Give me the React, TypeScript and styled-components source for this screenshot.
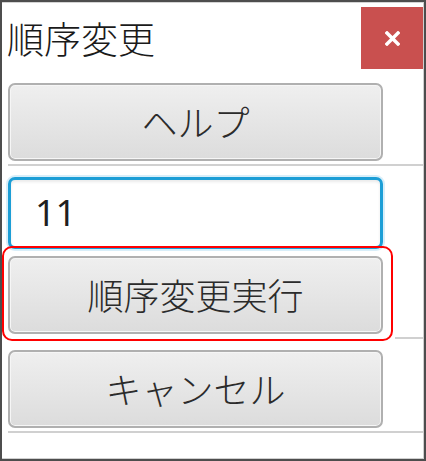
import React from 'react'
import styled, { createGlobalStyle } from 'styled-components'

const GlobalStyle = createGlobalStyle`
    html, body {
        margin: 0;
        padding: 0;
        background: #ffffff;
    }
    body {
        font-family: "Noto Sans CJK JP", "Noto Sans", sans-serif;
    }
`

function App() {
    return (
        <Frame>
            <GlobalStyle />
            <Panel>
                <Header>
                    <Title>順序変更</Title>
                    <CloseButton aria-label="close">
                        <svg width="15" height="15" viewBox="0 0 15 15">
                            <path d="M2 2 L13 13 M13 2 L2 13" stroke="#ffffff" strokeWidth="3.4" strokeLinecap="square" />
                        </svg>
                    </CloseButton>
                </Header>

                <Row $top={14}>
                    <ActionButton>ヘルプ</ActionButton>
                </Row>
                <Divider />

                <Row $top={11}>
                    <NumberInput defaultValue="11" />
                </Row>

                <Row $top={7}>
                    <Highlight>
                        <ActionButton>順序変更実行</ActionButton>
                    </Highlight>
                </Row>
                <Divider $hidden />

                <Row $top={11}>
                    <ActionButton>キャンセル</ActionButton>
                </Row>
                <Divider />
            </Panel>
        </Frame>
    )
}

const Frame = styled.div`
    width: 426px;
    height: 461px;
    box-sizing: border-box;
    border: 2px solid #4d4d4d;
    background: #ffffff;
`
const Panel = styled.div`
    height: 100%;
    box-sizing: border-box;
    border-top: 1px solid #d4d4d4;
    border-right: 1px solid #cfcfcf;
    border-bottom: 1px solid #cfcfcf;
    padding-left: 6px;
    display: flex;
    flex-direction: column;
`
const Header = styled.div`
    display: flex;
    justify-content: space-between;
    align-items: center;
    margin-top: 4px;
    height: 62px;
`
const Title = styled.h1`
    margin: 0 0 0 -1px;
    font-size: 37px;
    font-weight: 300;
    color: #1a1a1a;
    line-height: 1;
`
const CloseButton = styled.button`
    width: 62px;
    height: 62px;
    border: none;
    padding: 0;
    background: #c9504f;
    display: flex;
    align-items: center;
    justify-content: center;
`
const Row = styled.div<{ $top: number }>`
    margin-top: ${p => p.$top}px;
    width: 375px;
    display: flex;
`
const ActionButton = styled.button`
    width: 375px;
    height: 78px;
    box-sizing: border-box;
    border: 2px solid #b0b0b0;
    border-radius: 7px;
    box-shadow: inset 0 0 0 1px #f6f6f6;
    background: linear-gradient(#efefef, #dcdcdc);
    font-family: "Noto Sans CJK JP", "Noto Sans", sans-serif;
    font-size: 36px;
    font-weight: 300;
    color: #2b2b2b;
    padding: 0 0 3px;
    cursor: pointer;
`
const Divider = styled.div<{ $hidden?: boolean }>`
    margin-top: 3px;
    height: 2px;
    background: #d0d0d0;
    ${p => p.$hidden && `
        margin-left: 387px;
    `}
`
const NumberInput = styled.input`
    width: 375px;
    height: 72px;
    box-sizing: border-box;
    border: 3px solid #1c9ed6;
    border-radius: 7px;
    box-shadow: 0 0 0 2px #d8eef9, inset 0 2px 3px #eaeaea;
    padding: 0 0 2px 24px;
    font-family: "Noto Sans", "Liberation Sans", sans-serif;
    font-size: 36px;
    color: #1f1f1f;
    outline: none;
    background: #ffffff;
`
const Highlight = styled.div`
    position: relative;
    &::before {
        content: "";
        position: absolute;
        left: -6px;
        right: -10px;
        top: -10px;
        bottom: -7px;
        border: 2px solid #ff0000;
        border-radius: 10px;
        pointer-events: none;
    }
`

export default App
